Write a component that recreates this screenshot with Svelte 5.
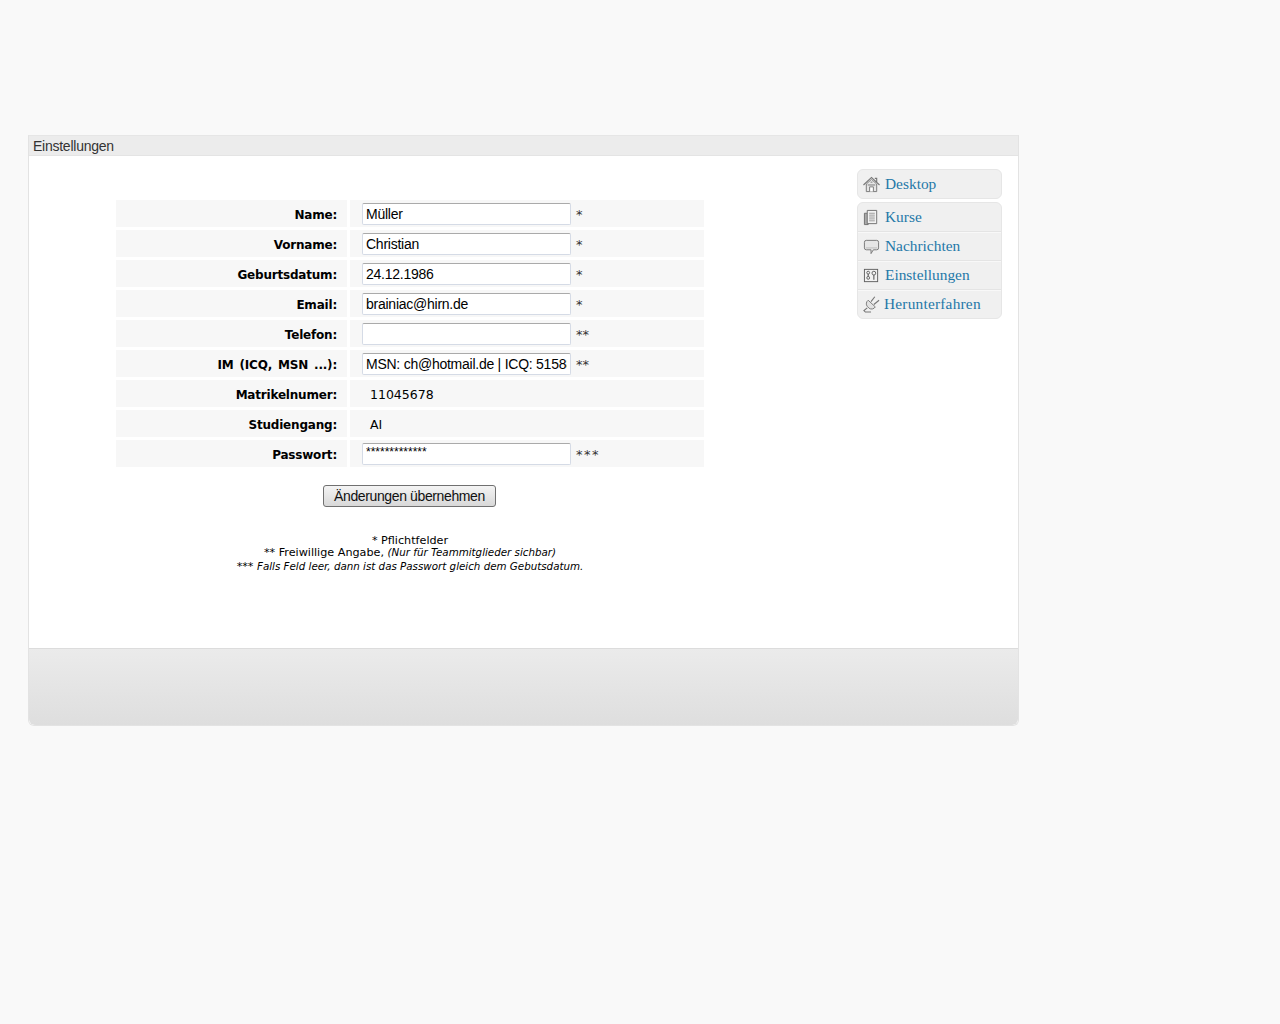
<script>
  const rows = [
    { label: "Name:", value: "Müller", mark: "*" },
    { label: "Vorname:", value: "Christian", mark: "*" },
    { label: "Geburtsdatum:", value: "24.12.1986", mark: "*" },
    { label: "Email:", value: "brainiac@hirn.de", mark: "*" },
    { label: "Telefon:", value: "", mark: "**" },
    { label: "IM (ICQ, MSN ...):", value: "MSN: ch@hotmail.de | ICQ: 515889123", mark: "**" },
    { label: "Matrikelnumer:", text: "11045678" },
    { label: "Studiengang:", text: "AI" },
    { label: "Passwort:", value: "*************", mark: "***", pass: true },
  ];
</script>

<div class="page">
  <div class="window">
    <div class="title">Einstellungen</div>
    <div class="content">
      <main class="main">
        <form class="form" on:submit|preventDefault>
          {#each rows as row}
            <div class="label">{row.label}</div>
            <div class="cell">
              {#if row.text}
                <span class="plain">{row.text}</span>
              {:else}
                <input class="field" class:pass={row.pass} type="text" value={row.value} />
                <span class="mark" class:wide={row.pass}>{row.mark}</span>
              {/if}
            </div>
          {/each}
          <div class="actions">
            <button type="submit">Änderungen übernehmen</button>
          </div>
        </form>
        <div class="notes">
          <div>* Pflichtfelder</div>
          <div class="second">** Freiwillige Angabe, <i>(Nur für Teammitglieder sichbar)</i></div>
          <div>*** <i>Falls Feld leer, dann ist das Passwort gleich dem Gebutsdatum.</i></div>
        </div>
      </main>

      <nav class="nav">
        <div class="group">
          <a class="item" href="#desktop">
            <svg viewBox="0 0 18 18" width="17" height="17">
              <path d="M.5 9.500 9 1.500l8.500 8M12.500 2.500h2v4" fill="none" stroke="#777" stroke-width="1.200" />
              <path d="M3.500 8.500 9 3.500l5.500 5v8h-11z" fill="#e6e6e6" stroke="#777" />
              <path d="M7 16.500v-5h4v5M5 9.500h8M8 6.500h2" fill="#fff" stroke="#777" />
            </svg>
            Desktop
          </a>
        </div>
        <div class="group">
          <a class="item" href="#kurse">
            <svg viewBox="0 0 18 18" width="17" height="17">
              <path d="M1.500 4.500h4v12h-4z" fill="#aaa" stroke="#707070" />
              <path d="M4.500 1.500h10v14h-10z" fill="#f2f2f2" stroke="#707070" />
              <path d="M6.500 4.500h6M6.500 6.500h6M6.500 8.500h6M6.500 10.500h6M6.500 12.500h6" stroke="#999" />
            </svg>
            Kurse
          </a>
          <a class="item" href="#nachrichten">
            <svg viewBox="0 0 18 18" width="17" height="17">
              <path d="M3.500 2.500h11a2 2 0 0 1 2 2v6a2 2 0 0 1-2 2H11l-2.500 4v-4h-5a2 2 0 0 1-2-2v-6a2 2 0 0 1 2-2z" fill="#e6e6e6" stroke="#777" />
              <path d="M3 10.500h12" stroke="#bbb" />
            </svg>
            Nachrichten
          </a>
          <a class="item" href="#einstellungen">
            <svg viewBox="0 0 18 18" width="17" height="17">
              <rect x="1.500" y="2.500" width="14" height="13" fill="#f2f2f2" stroke="#606060" />
              <circle cx="5.500" cy="6" r="1.500" fill="none" stroke="#606060" />
              <circle cx="5.500" cy="11.500" r="1.500" fill="none" stroke="#606060" />
              <path d="M5.500 7.500v2.500M11.500 8.500v5" stroke="#606060" stroke-width="1.200" />
              <circle cx="11.500" cy="6.500" r="2" fill="none" stroke="#606060" />
            </svg>
            Einstellungen
          </a>
          <a class="item shut" href="#herunterfahren">
            <svg viewBox="0 0 18 18" width="17" height="17">
              <path d="M5.500 4.500 13 11.500a4.500 4.500 0 0 1-6.500 1.500L4.500 11a4.500 4.500 0 0 1 1-6.500z" fill="#e2e2e2" stroke="#777" />
              <path d="M8.500 6 12.500.8M11.500 9 17 4.500M4.500 12.500 1 15.500l1.500 1.500h6" fill="none" stroke="#777" stroke-width="1.200" />
            </svg>
            Herunterfahren
          </a>
        </div>
      </nav>
    </div>
    <div class="footer"></div>
  </div>
</div>

<style>
  :global(body) {
    margin: 0;
    background: #f9f9f9;
  }

  .page {
    padding: 135px 0 298px 28px;
  }

  .window {
    width: 991px;
    box-sizing: border-box;
    border: 1px solid #e3e3e3;
    border-top-color: #e6e6e6;
    border-radius: 0 0 6px 6px;
    background: #fff;
  }

  .title {
    height: 19px;
    padding-left: 4px;
    background: #ececec;
    border-bottom: 1px solid #e4e4e4;
    font: 14px/21px "Liberation Sans", Arial, sans-serif;
    letter-spacing: -0.25px;
    color: #333;
  }

  .content {
    display: flex;
    justify-content: space-between;
    height: 492px;
  }

  .main {
    padding: 44px 0 0 87px;
  }

  .form {
    display: grid;
    grid-template-columns: 231px 354px;
    column-gap: 3px;
    row-gap: 3px;
  }

  .label,
  .cell {
    height: 27px;
    background: #f7f7f7;
    display: flex;
    align-items: center;
    color: #000;
  }

  .label {
    box-sizing: border-box;
    justify-content: flex-end;
    padding: 2px 10px 0 0;
    font: bold 12px "DejaVu Sans", Verdana, sans-serif;
    letter-spacing: -0.2px;
    word-spacing: 2px;
  }

  .cell {
    padding-left: 12px;
  }

  .field {
    width: 209px;
    height: 22px;
    box-sizing: border-box;
    padding: 0 3px;
    border: 1px solid #d5dbe6;
    border-top-color: #aaa;
    border-radius: 2px;
    background: #fff;
    font: 14px "Liberation Sans", Arial, sans-serif;
    letter-spacing: -0.25px;
    color: #000;
    outline: none;
  }

  .pass {
    font-size: 12px;
    letter-spacing: 0;
    padding-bottom: 3px;
  }

  .mark {
    margin: 2px 0 0 5px;
    font: 13px "DejaVu Sans", Verdana, sans-serif;
    color: #333;
  }

  .wide {
    letter-spacing: 1.500px;
  }

  .plain {
    padding: 2px 0 0 8px;
    font: 12.5px "DejaVu Sans", Verdana, sans-serif;
  }

  .actions {
    grid-column: 1 / 3;
    padding: 15px 0 0 207px;
  }

  button {
    width: 173px;
    height: 22px;
    padding: 0;
    border: 1px solid #707070;
    border-radius: 3px;
    background: linear-gradient(#f4f4f4, #d8d8d8);
    font: 14px "Liberation Sans", Arial, sans-serif;
    letter-spacing: -0.38px;
    color: #111;
  }

  .notes {
    margin-top: 27px;
    width: 588px;
    text-align: center;
    font: 11.200px/13px "DejaVu Sans", Verdana, sans-serif;
    color: #000;
  }

  .notes i {
    font-size: 10.300px;
  }

  .second {
    margin: -1px 0 1px;
  }

  .nav {
    width: 145px;
    margin: 13px 16px 0 0;
  }

  .group {
    margin-bottom: 3px;
    border: 1px solid #e6e6e6;
    border-radius: 6px;
    background: #f0f0f0;
  }

  .item {
    display: flex;
    align-items: center;
    gap: 5px;
    height: 28px;
    padding-left: 5px;
    border-top: 1px solid #e4e4e4;
    box-shadow: inset 0 1px 0 #f8f8f8;
    font: 15.400px "Liberation Serif", serif;
    color: #1f78a8;
    text-decoration: none;
  }

  .item:first-child {
    border-top: none;
    box-shadow: none;
  }

  .shut {
    gap: 4px;
    letter-spacing: 0.2px;
  }

  .footer {
    height: 76px;
    border-top: 1px solid #dcdcdc;
    border-radius: 0 0 6px 6px;
    background: linear-gradient(#ebebeb, #dedede);
  }
</style>
